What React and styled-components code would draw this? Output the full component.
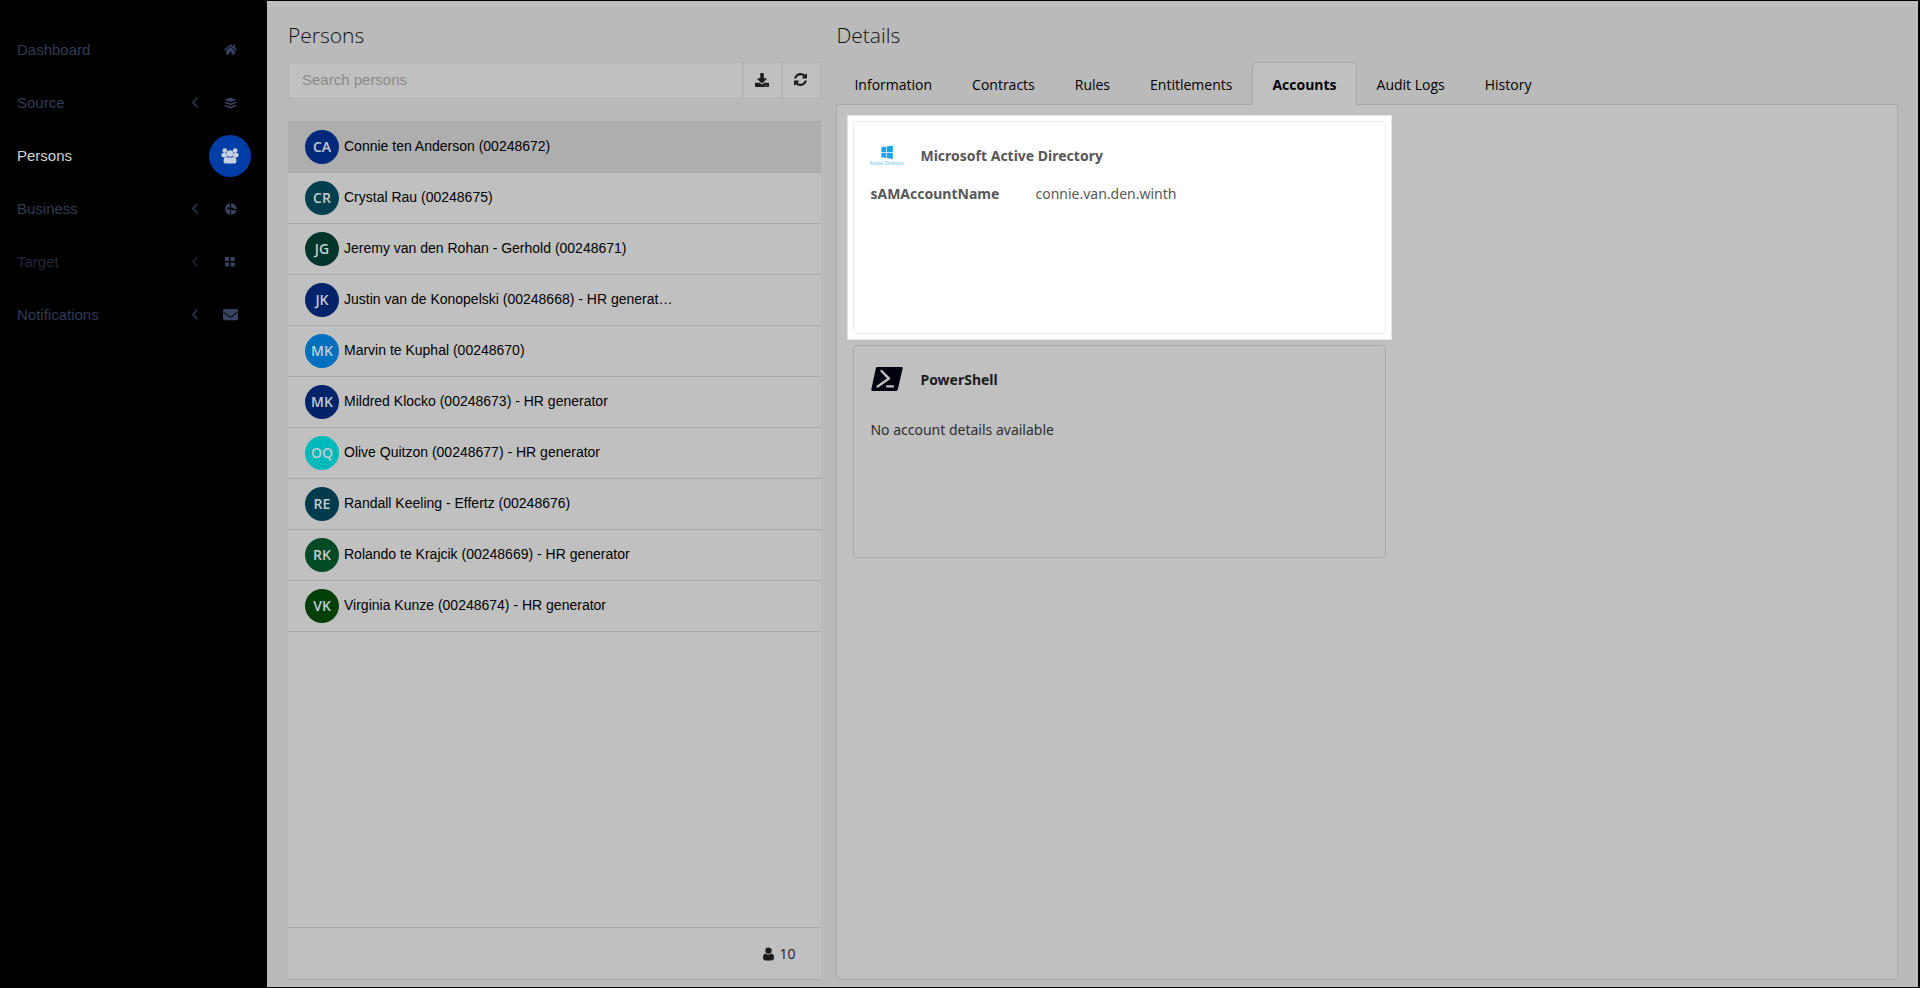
import React, { useState } from 'react';
import styled, { createGlobalStyle } from 'styled-components';
import { FaHome, FaDownload, FaEnvelope } from 'react-icons/fa';

const uiFont = `'Open Sans', 'Noto Sans', sans-serif`;
const cardFont = `'Noto Sans', 'Open Sans', sans-serif`;
const listFont = `'Liberation Sans', Arial, sans-serif`;

const GlobalStyle = createGlobalStyle`
    * {
        box-sizing: border-box;
    }
    body {
        margin: 0;
        background: #000;
        font-family: ${uiFont};
        color: #1c1c1c;
    }
    button, input {
        font: inherit;
        color: inherit;
    }
    h2, h3, p, ul, dl, dd {
        margin: 0;
        padding: 0;
    }
`

const Page = styled.div`
    display: flex;
    min-height: 100vh;
    background: #000;
    padding: 1px 2px 1px 0;
`

const Sidebar = styled.nav`
    flex: 0 0 267px;
    padding: 22px 16px 0 17px;
    font-family: ${listFont};
`

const NavItem = styled.a`
    display: flex;
    align-items: center;
    height: 53px;
    font-size: 15px;
    text-decoration: none;
    color: ${props => props.$active ? '#d6d6d6' : props.$faded ? '#20283a' : '#303b55'};
`

const NavLabel = styled.span`
    flex: 1;
`

const NavIcon = styled.span`
    display: flex;
    align-items: center;
    justify-content: center;
    width: 42px;
    height: 42px;
    margin-left: 11px;
    border-radius: 50%;
    background: ${props => props.$active ? '#003da6' : 'transparent'};
    color: ${props => props.$active ? '#c8d0e0' : '#3a4262'};
`

const Main = styled.main`
    flex: 1;
    min-width: 0;
    display: grid;
    grid-template-columns: 1fr 1.99fr;
    gap: 15px;
    padding: 12px 20px 7px 21px;
    background: #bababa;
    border-top: 6px solid #c0c0c0;
`

const Column = styled.section`
    min-width: 0;
    display: flex;
    flex-direction: column;
`

const Title = styled.h2`
    height: 43px;
    font-size: 21px;
    font-weight: 300;
    line-height: 33px;
    color: #111;
`

const SearchBar = styled.div`
    display: flex;
    height: 37px;
    border: 1px solid #b4b4b4;
    margin-bottom: 22px;
`

const SearchInput = styled.input`
    flex: 1;
    min-width: 0;
    border: none;
    background: #c0c0c0;
    padding: 0 13px 2px;
    font-family: ${listFont};
    font-size: 15px;
    outline: none;
    &::placeholder{
        color: #8a8a8a;
        opacity: 1;
    }
`

const ToolButton = styled.button`
    display: flex;
    align-items: center;
    justify-content: center;
    width: 39px;
    padding: 0 2px 2px 0;
    border: none;
    border-left: 2px solid #b4b4b4;
    background: #c0c0c0;
    color: #1c1c1c;
    cursor: pointer;
`

const PersonPanel = styled.div`
    flex: 1;
    display: flex;
    flex-direction: column;
    background: #c0c0c0;
    border-top: 1px solid #a8a8a8;
    border-bottom: 1px solid #a8a8a8;
`

const PersonList = styled.ul`
    flex: 1;
    list-style: none;
`

const PersonRow = styled.li`
    display: flex;
    align-items: center;
    gap: 5px;
    height: 51px;
    padding: 0 17px 1px;
    border-bottom: 1px solid #a8a8a8;
    background: ${props => props.$selected ? '#aeaeae' : 'transparent'};
    font-family: ${listFont};
    font-size: 14px;
    color: #000;
    cursor: pointer;
`

const Avatar = styled.span`
    flex: 0 0 34px;
    height: 34px;
    border-radius: 50%;
    background: ${props => props.$color};
    color: #c4ccd0;
    font-family: ${uiFont};
    font-size: 14px;
    font-weight: 600;
    line-height: 34px;
    text-align: center;
`

const PersonName = styled.span`
    padding-bottom: 2px;
    white-space: nowrap;
`

const ListFooter = styled.div`
    display: flex;
    align-items: center;
    justify-content: flex-end;
    gap: 5px;
    height: 52px;
    padding: 0 26px;
    border-top: 1px solid #a8a8a8;
    font-size: 14px;
`

const Tabs = styled.div`
    display: flex;
    height: 43px;
    margin-bottom: -1px;
    z-index: 1;
`

const Tab = styled.button`
    padding: 0 19px;
    border: 1px solid ${props => props.$active ? '#a8a8a8' : 'transparent'};
    border-bottom: none;
    border-radius: 5px 5px 0 0;
    background: ${props => props.$active ? '#c0c0c0' : 'transparent'};
    font-size: 14px;
    font-weight: ${props => props.$active ? 700 : 400};
    color: #000;
    cursor: pointer;
    &:first-child{
        padding-left: 17px;
    }
`

const TabPanel = styled.div`
    flex: 1;
    padding: 16px;
    background: #c0c0c0;
    border: 1px solid #a8a8a8;
    border-radius: 0 0 4px 4px;
`

const CardList = styled.div`
    display: grid;
    gap: 11px;
    width: calc(50% + 19px);
`

// white frame round the focused card, it reaches into the gap between cards
const Spotlight = styled.div`
    margin: -6px;
    padding: 5px;
    border: 1px solid #e4e4e4;
    background: #fff;
`

const Card = styled.article`
    height: 213px;
    padding: 16px;
    border: 1px solid ${props => props.$highlight ? '#ececec' : '#a8a8a8'};
    border-radius: 4px;
    color: ${props => props.$highlight ? '#575757' : '#2e2e2e'};
    font-family: ${cardFont};
    font-size: 14px;
`

const CardHead = styled.div`
    display: flex;
    align-items: center;
    gap: 16px;
    height: 34px;
`

const CardTitle = styled.h3`
    font-size: 14px;
    font-weight: 700;
    color: ${props => props.$highlight ? '#575757' : '#1c1c1c'};
`

const AccountFields = styled.dl`
    display: grid;
    grid-template-columns: 165px 1fr;
    margin-top: 11px;
    line-height: 22px;
`

const FieldName = styled.dt`
    font-weight: 700;
`

const EmptyNote = styled.p`
    margin-top: 23px;
    line-height: 22px;
`

const Chevron = () => (
    <svg width="6" height="11" viewBox="0 0 6 11" fill="none" stroke="currentColor" strokeWidth="1.4">
        <path d="M5.4 0.8L0.9 5.5L5.4 10.2" />
    </svg>
)

const StackIcon = () => (
    <svg width="13" height="12" viewBox="0 0 13 12" fill="currentColor">
        <path d="M6.5 0.4L12.5 2.7L6.5 5L0.5 2.7Z" />
        <path d="M0.5 5L2 4.8L6.5 6.6L11 4.8L12.5 5L12.5 5.8L6.5 8.2L0.5 5.8Z" />
        <path d="M0.5 8.2L2 8L6.5 9.8L11 8L12.5 8.2L12.5 9L6.5 11.4L0.5 9Z" />
    </svg>
)

const GroupIcon = () => (
    <svg width="18" height="16" viewBox="0 0 18 16" fill="currentColor">
        <circle cx="3.8" cy="2.6" r="2.4" />
        <circle cx="14.2" cy="2.6" r="2.4" />
        <rect x="0.4" y="5.1" width="5.6" height="4.2" rx="1.6" />
        <rect x="12" y="5.1" width="5.6" height="4.2" rx="1.6" />
        <circle cx="9" cy="5.6" r="3.3" />
        <path d="M2.6 12.2Q2.6 8.9 5.6 8.9Q9 10.2 12.4 8.9Q15.4 8.9 15.4 12.2V13.8Q15.4 15.6 13.6 15.6H4.4Q2.6 15.6 2.6 13.8Z" />
    </svg>
)

const PieIcon = () => (
    <svg width="13" height="12" viewBox="0 0 13 12" fill="currentColor">
        <path d="M5.9 0.3V4.6H3.2V6.2H5.9V11.7A5.8 5.8 0 0 1 5.9 0.3Z" />
        <path d="M7.1 0.3A5.8 5.8 0 0 1 12.7 6H9.6V4.8H7.1Z" />
        <path d="M7.1 11.7V6.6H8.4V7.2H12.6A5.8 5.8 0 0 1 7.1 11.7Z" />
    </svg>
)

const GridIcon = () => (
    <svg width="11" height="10" viewBox="0 0 11 10" fill="currentColor">
        <rect x="0" y="0" width="4" height="4" rx="0.6" />
        <rect x="5.6" y="0" width="4" height="4" rx="0.6" />
        <rect x="0" y="5.6" width="4" height="4" rx="0.6" />
        <rect x="5.6" y="5.6" width="4" height="4" rx="0.6" />
    </svg>
)

const UserIcon = () => (
    <svg width="11" height="14" viewBox="0 0 11 14" fill="currentColor">
        <circle cx="5.5" cy="3.6" r="3.2" />
        <path d="M2.6 6.4Q5.5 8.8 8.4 6.4Q11 6.8 11 10.8Q11 13.4 8.8 13.4H2.2Q0 13.4 0 10.8Q0 6.800 2.6 6.4Z" />
    </svg>
)

const RefreshIcon = () => (
    <svg width="13" height="13" viewBox="0 0 1536 1536" fill="currentColor">
        <path d="M1511 928q0 5-1 7-64 268-268 434.500T764 1536q-146 0-282.500-55T238 1324l-129 129q-19 19-45 19t-45-19-19-45V960q0-26 19-45t45-19h448q26 0 45 19t19 45-19 45l-137 137q71 66 161 102t187 36q134 0 250-65t186-179q11-17 53-117 8-23 30-23h192q13 0 22.500 9.500t9.500 22.500zM1536 128v448q0 26-19 45t-45 19h-448q-26 0-45-19t-19-45 19-45l138-138Q969 256 768 256q-134 0-250 65T332 500q-11 17-53 117-8 23-30 23H50q-13 0-22.500-9.500T18 608v-7q65-268 270-434.500T768 0q146 0 284 55.500T1297 212l130-129q19-19 45-19t45 19 19 45z" />
    </svg>
)

const DirectoryLogo = () => (
    <svg width="34" height="22" viewBox="0 0 34 22">
        <g fill="#12a5e8">
            <path d="M11.4 3.2L16.2 2.5V8.1H11.4Z" />
            <path d="M16.9 2.4L22.8 1.5V8.1H16.9Z" />
            <path d="M11.4 8.8H16.2V13.9L11.4 13.2Z" />
            <path d="M16.9 8.8H22.8V14.9L16.9 14Z" />
        </g>
        <text x="17" y="21" textAnchor="middle" fontFamily="Liberation Sans, sans-serif" fontSize="5" fill="#6cc4ee">Active Directory</text>
    </svg>
)

const ShellLogo = () => (
    <svg width="34" height="26" viewBox="0 0 34 26">
        <path d="M7.2 1H31.6Q33 1 32.6 2.4L27.8 23.6Q27.4 25 26 25H2.4Q1 25 1.3 23.6L5.8 2.4Q6.2 1 7.2 1Z" fill="#02020f" />
        <path d="M11.5 5L19 12.6L7.6 20.6" fill="none" stroke="#c0c0c0" strokeWidth="2.4" strokeLinecap="round" strokeLinejoin="round" />
        <path d="M17 20.4H23" stroke="#c0c0c0" strokeWidth="2.2" strokeLinecap="round" />
    </svg>
)

const navItems = [
    { label: 'Dashboard', icon: <FaHome size={13} /> },
    { label: 'Source', icon: <StackIcon />, expandable: true },
    { label: 'Persons', icon: <GroupIcon />, active: true },
    { label: 'Business', icon: <PieIcon />, expandable: true },
    { label: 'Target', icon: <GridIcon />, expandable: true, faded: true },
    { label: 'Notifications', icon: <FaEnvelope size={15} />, expandable: true },
]

const persons = [
    { initials: 'CA', name: 'Connie ten Anderson (00248672)', color: '#00297c' },
    { initials: 'CR', name: 'Crystal Rau (00248675)', color: '#003f50' },
    { initials: 'JG', name: 'Jeremy van den Rohan - Gerhold (00248671)', color: '#00352c' },
    { initials: 'JK', name: 'Justin van de Konopelski (00248668) - HR generator', color: '#002369' },
    { initials: 'MK', name: 'Marvin te Kuphal (00248670)', color: '#006fbe' },
    { initials: 'MK', name: 'Mildred Klocko (00248673) - HR generator', color: '#002369' },
    { initials: 'OQ', name: 'Olive Quitzon (00248677) - HR generator', color: '#00b9bb' },
    { initials: 'RE', name: 'Randall Keeling - Effertz (00248676)', color: '#003c4c' },
    { initials: 'RK', name: 'Rolando te Krajcik (00248669) - HR generator', color: '#004a26' },
    { initials: 'VK', name: 'Virginia Kunze (00248674) - HR generator', color: '#003f06' },
]

const tabs = ['Information', 'Contracts', 'Rules', 'Entitlements', 'Accounts', 'Audit Logs', 'History']

const maxNameLength = 48;

const shorten = (name) => name.length > maxNameLength ? `${name.slice(0, maxNameLength)}…` : name;

const App = () =>{
    const[ selected, setSelected ] = useState(0);
    const[ tab, setTab ] = useState('Accounts');
    const[ search, setSearch ] = useState('');

    return(
        <>
            <GlobalStyle />
            <Page>
                <Sidebar>
                    {navItems.map(item => (
                        <NavItem key={item.label} href="#" $active={item.active} $faded={item.faded}>
                            <NavLabel>{item.label}</NavLabel>
                            {item.expandable ? <Chevron /> : null}
                            <NavIcon $active={item.active}>{item.icon}</NavIcon>
                        </NavItem>
                    ))}
                </Sidebar>
                <Main>
                    <Column>
                        <Title>Persons</Title>
                        <SearchBar>
                            <SearchInput
                                aria-label="Search persons"
                                placeholder="Search persons"
                                value={search}
                                onChange={(e) => setSearch(e.target.value)}
                            />
                            <ToolButton aria-label="Download"><FaDownload size={14} /></ToolButton>
                            <ToolButton aria-label="Refresh"><RefreshIcon /></ToolButton>
                        </SearchBar>
                        <PersonPanel>
                            <PersonList>
                                {persons.map((person, i) => (
                                    <PersonRow key={person.name} $selected={i === selected} onClick={() => setSelected(i)}>
                                        <Avatar $color={person.color}>{person.initials}</Avatar>
                                        <PersonName>{shorten(person.name)}</PersonName>
                                    </PersonRow>
                                ))}
                            </PersonList>
                            <ListFooter>
                                <UserIcon />
                                <span>{persons.length}</span>
                            </ListFooter>
                        </PersonPanel>
                    </Column>
                    <Column>
                        <Title>Details</Title>
                        <Tabs role="tablist">
                            {tabs.map(name => (
                                <Tab key={name} role="tab" aria-selected={name === tab} $active={name === tab} onClick={() => setTab(name)}>
                                    {name}
                                </Tab>
                            ))}
                        </Tabs>
                        <TabPanel role="tabpanel">
                            <CardList>
                                <Spotlight>
                                    <Card $highlight>
                                        <CardHead>
                                            <DirectoryLogo />
                                            <CardTitle $highlight>Microsoft Active Directory</CardTitle>
                                        </CardHead>
                                        <AccountFields>
                                            <FieldName>sAMAccountName</FieldName>
                                            <dd>connie.van.den.winth</dd>
                                        </AccountFields>
                                    </Card>
                                </Spotlight>
                                <Card>
                                    <CardHead>
                                        <ShellLogo />
                                        <CardTitle>PowerShell</CardTitle>
                                    </CardHead>
                                    <EmptyNote>No account details available</EmptyNote>
                                </Card>
                            </CardList>
                        </TabPanel>
                    </Column>
                </Main>
            </Page>
        </>
    );
};

export default App;
